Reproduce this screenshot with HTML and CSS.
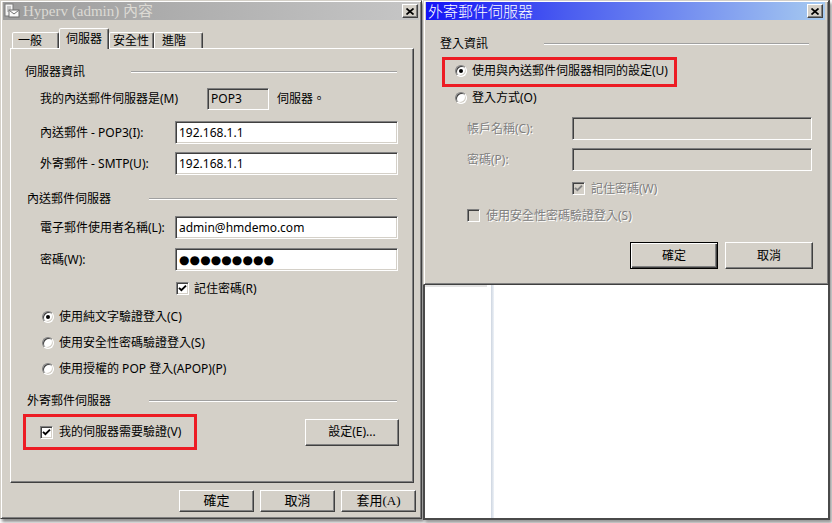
FILE: index.html
```html
<!DOCTYPE html>
<html lang="zh-Hant">
<head>
<meta charset="utf-8">
<title>Hyperv (admin) 內容</title>
<link rel="stylesheet" href="styles.css">
</head>
<body>
<div class="desk">

  <div class="win win-props">
    <div class="titlebar titlebar-inactive">
      <svg class="appicon" width="16" height="16" viewBox="0 0 16 16">
        <rect x="1" y="1" width="8" height="12" fill="#f4f4f4" stroke="#7a7a7a"/>
        <path d="M3 4h4M3 6h4M3 8h4" stroke="#9a9a9a"/>
        <rect x="5" y="7" width="10" height="7" fill="#fafafa" stroke="#6e6e6e"/>
        <path d="M5.5 7.5l4.5 3.5l4.5-3.5" fill="none" stroke="#6e6e6e"/>
      </svg>
      <span class="title-text serif">Hyperv (admin) 內容</span>
      <span class="closebtn"><svg width="8" height="7" viewBox="0 0 8 7"><path d="M0.5 0.5L7.5 6.5M7.5 0.5L0.5 6.5" stroke="#000" stroke-width="1.7"/></svg></span>
    </div>

    <div class="tabs">
      <div class="tab tab-1">一般</div>
      <div class="tab tab-active">伺服器</div>
      <div class="tab tab-3">安全性</div>
      <div class="tab tab-4">進階</div>
    </div>

    <div class="panel">
      <div class="group group-a"><span class="group-label">伺服器資訊</span><span class="rule"></span></div>

      <div class="row row-m">
        <span class="lbl lbl-m">我的內送郵件伺服器是(M)</span>
        <span class="field field-ro">POP3</span>
        <span class="after">伺服器。</span>
      </div>
      <div class="row row-pop3">
        <span class="lbl">內送郵件 - POP3(I):</span>
        <span class="field">192.168.1.1</span>
      </div>
      <div class="row row-smtp">
        <span class="lbl">外寄郵件 - SMTP(U):</span>
        <span class="field">192.168.1.1</span>
      </div>

      <div class="group group-b"><span class="group-label">內送郵件伺服器</span><span class="rule"></span></div>

      <div class="row row-user">
        <span class="lbl">電子郵件使用者名稱(L):</span>
        <span class="field">admin@hmdemo.com</span>
      </div>
      <div class="row row-pass">
        <span class="lbl">密碼(W):</span>
        <span class="field"><span class="dots">●●●●●●●●●</span></span>
      </div>
      <div class="row row-remember">
        <span class="check"><svg width="9" height="9" viewBox="0 0 9 9"><path d="M1 3.8L3.4 6.2L8 1.6" fill="none" stroke="#000" stroke-width="1.9"/></svg></span>
        <span class="opt-text">記住密碼(R)</span>
      </div>

      <div class="row row-radio row-r1">
        <span class="radio radio-on"></span>
        <span class="opt-text">使用純文字驗證登入(C)</span>
      </div>
      <div class="row row-radio row-r2">
        <span class="radio"></span>
        <span class="opt-text">使用安全性密碼驗證登入(S)</span>
      </div>
      <div class="row row-radio row-r3">
        <span class="radio"></span>
        <span class="opt-text">使用授權的 POP 登入(APOP)(P)</span>
      </div>

      <div class="group group-c"><span class="group-label">外寄郵件伺服器</span><span class="rule"></span></div>

      <div class="row row-auth">
        <div class="redbox redbox-auth">
          <span class="check"><svg width="9" height="9" viewBox="0 0 9 9"><path d="M1 3.8L3.4 6.2L8 1.6" fill="none" stroke="#000" stroke-width="1.9"/></svg></span>
          <span class="opt-text">我的伺服器需要驗證(V)</span>
        </div>
        <span class="btn btn-settings">設定(E)...</span>
      </div>
    </div>

    <div class="footer">
      <span class="btn btn-foot serif">確定</span>
      <span class="btn btn-foot serif">取消</span>
      <span class="btn btn-foot serif">套用(A)</span>
    </div>
  </div>

  <div class="backwin">
    <div class="bp-hidden"></div>
    <div class="bp-main">
      <div class="bp-side"></div>
      <div class="bp-split"></div>
      <div class="bp-content"></div>
    </div>
  </div>

  <div class="win win-dialog">
    <div class="titlebar titlebar-active">
      <span class="title-text title-dlg">外寄郵件伺服器</span>
      <span class="closebtn"><svg width="8" height="7" viewBox="0 0 8 7"><path d="M0.5 0.5L7.5 6.5M7.5 0.5L0.5 6.5" stroke="#000" stroke-width="1.7"/></svg></span>
    </div>
    <div class="dlg-body">
      <div class="group group-d"><span class="group-label">登入資訊</span><span class="rule"></span></div>

      <div class="redbox redbox-same">
        <span class="radio radio-on"></span>
        <span class="opt-text">使用與內送郵件伺服器相同的設定(U)</span>
      </div>
      <div class="row row-login">
        <span class="radio"></span>
        <span class="opt-text">登入方式(O)</span>
      </div>
      <div class="row row-acct">
        <span class="lbl lbl-dlg disabled">帳戶名稱(C):</span>
        <span class="field field-off"></span>
      </div>
      <div class="row row-dpass">
        <span class="lbl lbl-dlg disabled">密碼(P):</span>
        <span class="field field-off"></span>
      </div>
      <div class="row row-dremember">
        <span class="check check-off"><svg width="9" height="9" viewBox="0 0 9 9"><path d="M1 3.8L3.4 6.2L8 1.6" fill="none" stroke="#808080" stroke-width="1.9"/></svg></span>
        <span class="opt-text disabled">記住密碼(W)</span>
      </div>
      <div class="row row-spa">
        <span class="check check-off"></span>
        <span class="opt-text disabled">使用安全性密碼驗證登入(S)</span>
      </div>
      <div class="dlg-buttons">
        <span class="btn btn-dlg btn-default">確定</span>
        <span class="btn btn-dlg">取消</span>
      </div>
    </div>
  </div>

</div>
</body>
</html>
```

FILE: styles.css
```css
* { box-sizing: border-box; margin: 0; padding: 0; }

html, body { width: 832px; height: 523px; overflow: hidden; background: #fff; }

body {
  font-family: "Noto Sans", "Noto Sans CJK TC", sans-serif;
  font-size: 12px;
  line-height: 14px;
  color: #000;
}

.serif { font-family: "Liberation Serif", "Noto Sans CJK TC", serif; }

.desk { position: relative; width: 832px; height: 523px; background: #fff; }

/* ---------- windows ---------- */
.win {
  position: absolute;
  top: 0;
  background: #d4d0c8;
  border: 1px solid;
  border-color: #d4d0c8 #404040 #404040 #d4d0c8;
  box-shadow: inset 1px 1px #fff, inset -1px -1px #808080;
  display: flex;
  flex-direction: column;
}

.win-props {
  left: 0;
  width: 422px;
  height: 519px;
  padding: 1px 2px 2px 2px;
  z-index: 1;
  box-shadow: inset 1px 1px #fff, inset -1px -1px #808080, 2px 3px 3px rgba(0,0,0,.45);
}

.win-dialog {
  left: 423px;
  width: 406px;
  height: 285px;
  padding: 1px 3px 2px 2px;
  z-index: 3;
}

.titlebar {
  height: 18px;
  flex: none;
  display: flex;
  align-items: center;
  gap: 3px;
}

.titlebar-inactive {
  background: linear-gradient(to right, #9c9c9c, #c6c6c6);
  color: #dcdad4;
  padding: 0 1px 0 1px;
}

.titlebar-active {
  background: linear-gradient(to right, #1414f6, #4a5cf0 35%, #a6caf0);
  color: #fff;
  padding: 0 2px 0 2px;
}

.appicon { flex: none; }

.title-text {
  flex: 1;
  font-size: 15px;
  line-height: 18px;
  white-space: nowrap;
}

.title-dlg { font-family: "Noto Sans CJK TC", sans-serif; font-size: 15px; font-weight: 300; }

.closebtn {
  flex: none;
  width: 16px;
  height: 14px;
  background: #d4d0c8;
  border: 1px solid;
  border-color: #fff #404040 #404040 #fff;
  box-shadow: inset -1px -1px #808080;
  display: flex;
  align-items: center;
  justify-content: center;
}

/* ---------- tabs ---------- */
.tabs {
  display: flex;
  align-items: flex-end;
  height: 20px;
  margin: 8px 0 0 9px;
  position: relative;
  z-index: 2;
}

.tab {
  height: 16px;
  border: 1px solid;
  border-bottom: none;
  border-color: #fff #404040 transparent #fff;
  box-shadow: inset -1px 0 #808080;
  border-radius: 2px 2px 0 0;
  background: #d4d0c8;
  display: flex;
  align-items: center;
  white-space: nowrap;
}

.tab-1 { width: 47px; padding-left: 5px; }
.tab-active { width: 50px; height: 21px; margin-bottom: -1px; padding-left: 6px; align-items: flex-start; padding-top: 3px; }
.tab-3 { width: 45px; padding-left: 3px; }
.tab-4 { width: 49px; padding-left: 7px; }

/* ---------- panel ---------- */
.panel {
  margin-left: 7px;
  width: 404px;
  height: 435px;
  flex: none;
  border: 1px solid;
  border-color: #fff #404040 #404040 #fff;
  box-shadow: inset -1px -1px #808080;
  padding: 16px 15px 0 14px;
  display: flex;
  flex-direction: column;
}

.group { display: flex; align-items: center; height: 14px; flex: none; }
.group-label { flex: none; white-space: nowrap; }
.rule {
  flex: 1;
  height: 2px;
  border-top: 1px solid #a0a0a0;
  border-bottom: 1px solid #fff;
  margin-right: 1px;
}

.group-a .group-label { width: 106px; }
.group-b, .group-c { margin-left: 2px; }
.group-b .group-label, .group-c .group-label { width: 122px; }
.group-b { margin-top: 17px; }
.group-c { margin-top: 19px; }

.row { display: flex; align-items: center; padding-left: 15px; flex: none; }
.lbl { width: 135px; flex: none; white-space: nowrap; }
.lbl-m { width: 167px; }

.field {
  flex: none;
  width: 223px;
  height: 23px;
  background: #fff;
  border: 1px solid;
  border-color: #808080 #fff #fff #808080;
  box-shadow: inset 1px 1px #404040, inset -1px -1px #d4d0c8;
  padding: 0 3px;
  display: flex;
  align-items: center;
  white-space: nowrap;
}

.field-ro { width: 62px; height: 22px; background: #d4d0c8; }
.after { margin-left: 8px; white-space: nowrap; }

.dots {
  font-family: "DejaVu Sans", sans-serif;
  font-size: 12px;
  letter-spacing: 0.1px;
  line-height: 14px;
}

.row-m { margin-top: 9px; }
.row-pop3 { margin-top: 11px; }
.row-smtp { margin-top: 8px; }
.row-user { margin-top: 10px; }
.row-pass { margin-top: 9px; }
.row-remember { margin-top: 11px; padding-left: 151px; height: 13px; }

.row-radio { height: 13px; padding-left: 17px; }
.row-r1 { margin-top: 15px; }
.row-r2, .row-r3 { margin-top: 13px; }

.row-auth {
  margin-top: 6px;
  padding-left: 0;
  justify-content: space-between;
}

.opt-text { white-space: nowrap; }

/* checkbox / radio */
.check {
  flex: none;
  width: 13px;
  height: 13px;
  background: #fff;
  border: 1px solid;
  border-color: #808080 #fff #fff #808080;
  box-shadow: inset 1px 1px #404040, inset -1px -1px #d4d0c8;
  display: flex;
  align-items: center;
  justify-content: center;
  margin-right: 5px;
}

.check-off { background: #d4d0c8; margin-right: 6px; }

.radio {
  flex: none;
  position: relative;
  width: 12px;
  height: 12px;
  border-radius: 50%;
  background: #fff;
  border: 1px solid;
  border-color: #808080 #fff #fff #808080;
  box-shadow: inset 1px 1px #404040, inset -1px -1px #d4d0c8;
  margin-right: 5px;
}

.radio-on::after {
  content: "";
  position: absolute;
  left: 3px;
  top: 3px;
  width: 4px;
  height: 4px;
  border-radius: 50%;
  background: #000;
}

.redbox {
  border: 3px solid #ed1c24;
  display: flex;
  align-items: center;
  flex: none;
}

.redbox-auth {
  width: 174px;
  height: 36px;
  margin-left: -2px;
  padding-left: 14px;
}
.redbox-auth .check { margin-right: 6px; }

/* buttons */
.btn {
  flex: none;
  background: #d4d0c8;
  border: 1px solid;
  border-color: #fff #404040 #404040 #fff;
  box-shadow: inset -1px -1px #808080;
  display: flex;
  align-items: center;
  justify-content: center;
  white-space: nowrap;
}

.btn-settings { width: 94px; height: 27px; margin-right: -1px; }

.footer {
  display: flex;
  justify-content: flex-end;
  gap: 6px;
  margin-top: 7px;
  padding-right: 3px;
}

.btn-foot { width: 75px; height: 22px; font-size: 13px; }

/* ---------- dialog ---------- */
.dlg-body {
  padding: 17px 12px 0 14px;
  display: flex;
  flex-direction: column;
}

.group-d .group-label { width: 104px; }
.group-d .rule { margin-right: 4px; }

.redbox-same {
  margin-top: 6px;
  margin-left: 2px;
  width: 235px;
  height: 30px;
  padding-left: 10px;
  padding-bottom: 2px;
}

.row-login { margin-top: 4px; height: 13px; }
.row-acct { margin-top: 13px; padding-left: 27px; }
.row-dpass { margin-top: 8px; padding-left: 27px; }
.lbl-dlg { width: 105px; }
.field-off { width: 240px; background: #d4d0c8; }

.row-dremember { margin-top: 11px; padding-left: 132px; height: 13px; }
.row-spa { margin-top: 14px; padding-left: 27px; height: 13px; }

.disabled { color: #808080; text-shadow: 1px 1px 0 #fff; }

.dlg-buttons {
  display: flex;
  justify-content: flex-end;
  gap: 7px;
  margin-top: 20px;
}

.btn-dlg { width: 88px; height: 27px; }

.btn-default {
  border: 1px solid #000;
  box-shadow: inset 1px 1px #fff, inset -1px -1px #404040, inset -2px -2px #808080;
}

/* ---------- window behind the dialog ---------- */
.backwin {
  position: absolute;
  left: 423px;
  top: 0;
  width: 407px;
  height: 520px;
  z-index: 2;
  background: #fff;
  border: 2px solid #4a4a4a;
  box-shadow: 2px 3px 3px rgba(0,0,0,.4);
  display: flex;
  flex-direction: column;
}

.bp-hidden { height: 283px; flex: none; }

.bp-main { flex: 1; display: flex; }

.bp-side {
  width: 66px;
  flex: none;
  background: linear-gradient(#e2e2e2, #e2e2e2) no-repeat 0 0 / 62px 2px;
}

.bp-split {
  width: 3px;
  flex: none;
  background: linear-gradient(to right, #cdd5e0, #eef2f7);
}

.bp-content { flex: 1; }
```
